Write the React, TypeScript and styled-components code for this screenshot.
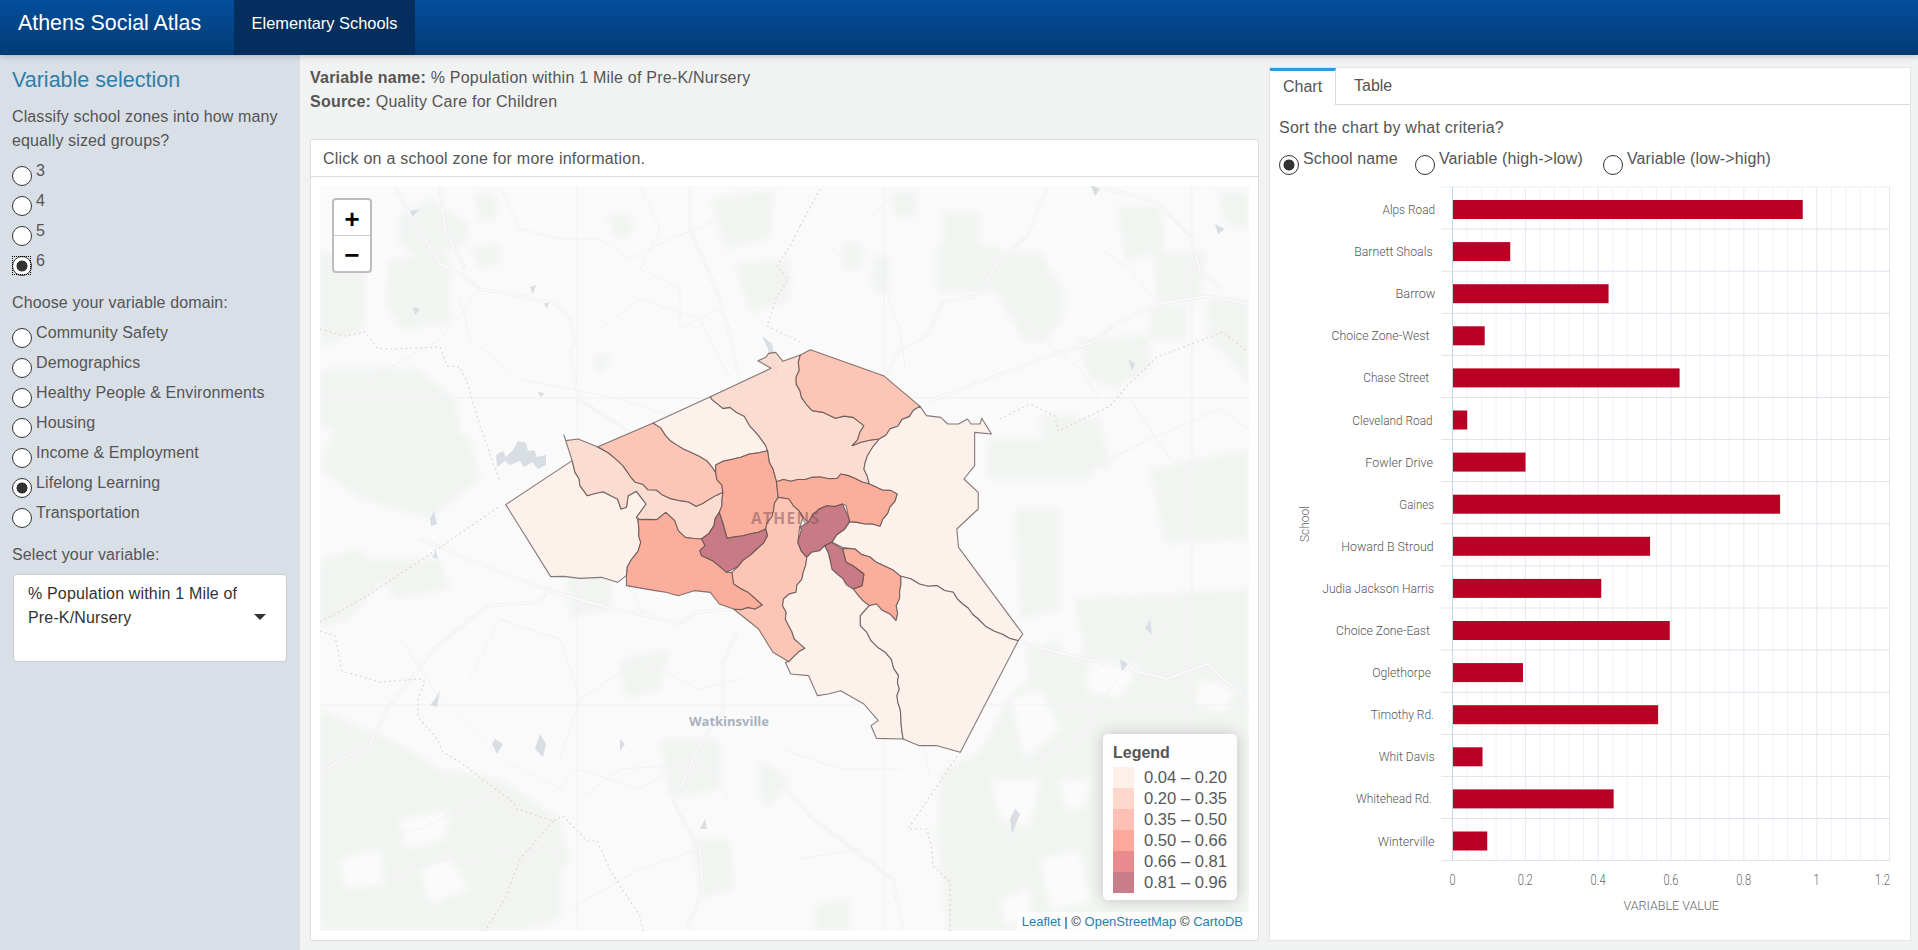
import React from "react";
import styled, { createGlobalStyle } from "styled-components";

const Global = createGlobalStyle`
  html, body { margin: 0; padding: 0; height: 100%; overflow: hidden; }
  body { font-family: "Liberation Sans", Arial, sans-serif; font-size: 16px; color: #555; background: #f1f2f2; }
  #root { height: 100%; }
`;

const Page = styled.div`
  display: flex;
  flex-direction: column;
  height: 950px;
`;
const Navbar = styled.header`
  height: 55px;
  flex: none;
  display: flex;
  align-items: stretch;
  position: relative;
  z-index: 2;
  background: linear-gradient(#024f9b, #033a74);
  box-shadow: 0 1px 6px rgba(0, 0, 0, 0.22);
`;
const Brand = styled.div`
  width: 216px;
  padding-left: 18px;
  line-height: 47px;
  font-size: 21.4px;
  color: #fff;
`;
const NavLink = styled.div`
  width: 181px;
  text-align: center;
  line-height: 47px;
  font-size: 16.4px;
  color: #fff;
  background: #032e5d;
`;
const Body = styled.div`
  flex: 1;
  display: grid;
  grid-template-columns: 300px 1fr;
  min-height: 0;
`;
const Sidebar = styled.aside`
  background: #d9dfe7;
  padding: 10px 13px 0 12px;
`;
const SideTitle = styled.h2`
  margin: 0 0 11px;
  font-weight: 400;
  font-size: 21.5px;
  line-height: 30px;
  height: 28px;
  color: #2f7ea8;
`;
const FieldLabel = styled.div`
  padding-top: 1px;
  line-height: 24px;
  font-size: 16px;
  letter-spacing: 0.12px;
  margin-bottom: 7px;
`;
const RadioGroup = styled.div`
  margin-bottom: 10px;
`;
const RadioRow = styled.label`
  position: relative;
  display: flex;
  align-items: flex-start;
  height: 30px;
  line-height: 22px;
  font-size: 16px;
  letter-spacing: 0.09px;
`;
const FocusMark = styled.span`
  position: absolute;
  left: 1px;
  top: 7px;
  width: 17px;
  height: 17px;
  outline: 1px dotted #000;
`;
const Radio = styled.input.attrs({ type: "radio", readOnly: true })`
  appearance: none;
  box-sizing: border-box;
  width: 20px;
  height: 20px;
  margin: 6px 4px 0 0;
  flex: none;
  border: 1px solid #333;
  border-radius: 50%;
  background: #fff;
  &:checked { background: radial-gradient(circle, #333 0 5.2px, #fff 5.8px); }
`;
const SelectBox = styled.div`
  box-sizing: border-box;
  width: 274px;
  height: 88px;
  margin-left: 1px;
  padding: 7px 36px 0 14px;
  position: relative;
  background: #fff;
  border: 1px solid #ccc;
  border-radius: 4px;
  font-size: 16px;
  letter-spacing: 0.16px;
  line-height: 24px;
  color: #333;
`;
const Caret = styled.span`
  position: absolute;
  right: 20px;
  top: 39px;
  border-style: solid;
  border-width: 6px 6px 0;
  border-color: #333 transparent transparent;
`;
const Main = styled.main`
  display: grid;
  grid-template-columns: 949px 642px;
  column-gap: 10px;
  padding: 0 7px 9px 10px;
  min-height: 0;
`;
const Center = styled.section`
  display: flex;
  flex-direction: column;
  padding-top: 11px;
  min-height: 0;
`;
const InfoLine = styled.div`
  line-height: 24px;
  font-size: 16px;
  letter-spacing: 0.22px;
  b { font-weight: 700; }
`;
const Panel = styled.div`
  flex: 1;
  margin-top: 25px;
  display: flex;
  flex-direction: column;
  background: #fff;
  border: 1px solid #ddd;
  border-radius: 2px;
  min-height: 0;
`;
const PanelHead = styled.div`
  height: 37px;
  flex: none;
  box-sizing: border-box;
  padding-left: 12px;
  line-height: 38px;
  font-size: 16px;
  letter-spacing: 0.23px;
  border-bottom: 1px solid #ddd;
`;
const PanelBody = styled.div`
  flex: 1;
  padding: 9px;
  min-height: 0;
`;
const MapBox = styled.div`
  position: relative;
  width: 929px;
  height: 745px;
  overflow: hidden;
  background: #fafafa;
`;
const MapSvg = styled.svg`
  display: block;
`;
const ZoomControl = styled.div`
  position: absolute;
  left: 12px;
  top: 12px;
  width: 36px;
  border: 2px solid #bdbdbd;
  border-radius: 4px;
  background: #fff;
`;
const ZoomButton = styled.div<{ $last?: boolean }>`
  height: 35px;
  overflow: hidden;
  line-height: 42px;
  text-align: center;
  font-family: "Liberation Mono", monospace;
  font-weight: 700;
  font-size: 26px;
  color: #000;
  ${(p) => (p.$last ? "" : "border-bottom: 1px solid #ccc;")}
`;
const Legend = styled.div`
  position: absolute;
  left: 783px;
  top: 548px;
  box-sizing: border-box;
  width: 134px;
  height: 166px;
  padding: 8px 8px 0 10px;
  background: rgba(255, 255, 255, 0.85);
  border-radius: 5px;
  box-shadow: 0 0 15px rgba(0, 0, 0, 0.2);
`;
const LegendTitle = styled.div`
  font-weight: 700;
  font-size: 16px;
  line-height: 22px;
  margin-bottom: 3px;
`;
const LegendRow = styled.div`
  display: flex;
  height: 21px;
  line-height: 22px;
  font-size: 16.6px;
  color: #595959;
`;
const Swatch = styled.i<{ $c: string }>`
  width: 21px;
  height: 21px;
  margin-right: 10px;
  background: ${(p) => p.$c};
`;
const Attribution = styled.div`
  position: absolute;
  right: 0;
  bottom: 0;
  height: 19px;
  padding: 0 6px 0 5px;
  line-height: 19px;
  font-size: 13px;
  color: #333;
  background: rgba(255, 255, 255, 0.75);
  a { color: #2a7ea6; text-decoration: none; }
`;
const RightPanel = styled.section`
  margin-top: 12px;
  display: flex;
  flex-direction: column;
  background: #fff;
  border: 1px solid #e3e3e3;
  min-height: 0;
`;
const Tabs = styled.div`
  flex: none;
  height: 37px;
  box-sizing: border-box;
  display: flex;
  border-bottom: 1px solid #d5dbe3;
`;
const Tab = styled.div<{ $active?: boolean }>`
  box-sizing: border-box;
  height: 37px;
  font-size: 16px;
  padding: 0 ${(p) => (p.$active ? "13px" : "18px")};
  ${(p) =>
    p.$active
      ? "width: 66px; line-height: 32px; border-top: 3px solid #2e9ad8; border-right: 1px solid #d5dbe3; background: #fff;"
      : "line-height: 36px;"}
`;
const SortBlock = styled.div`
  padding: 11px 0 0 9px;
`;
const SortLabel = styled.div`
  line-height: 24px;
  font-size: 16px;
  letter-spacing: 0.25px;
`;
const SortRow = styled.div`
  display: flex;
  margin-top: 9px;
  height: 26px;
`;
const SortOption = styled.label<{ $w: number }>`
  display: flex;
  align-items: flex-start;
  width: ${(p) => p.$w}px;
  line-height: 20px;
  font-size: 16px;
  letter-spacing: 0.12px;
`;
const ChartSvg = styled.svg`
  display: block;
  flex: none;
`;

const green: string[] = [
  "475,195 495,195 497,220 480,222", "400,215 430,200 470,225 465,245 420,260 400,245", "470,250 500,245 500,265 480,270",
  "390,260 450,255 450,325 400,330 385,300", "710,200 775,190 770,240 725,250", "735,265 790,260 790,300 750,315",
  "593,355 610,355 605,373 595,373", "607,215 630,215 633,235 615,240", "320,250 365,270 365,330 320,350",
  "320,370 420,370 455,400 460,430 320,430", "340,410 420,400 470,440 480,480 430,520 360,500 320,470",
  "370,560 440,560 450,590 395,600", "320,710 400,745 440,770 500,780 560,820 570,860 540,900 500,932 320,932",
  "320,560 360,550 385,580 350,620 320,630", "505,860 560,870 560,920 520,932 495,932", "893,193 917,193 917,217 893,217",
  "843,243 863,243 863,270 843,270", "873,257 890,257 890,293 873,293", "943,213 980,213 980,260 943,260",
  "937,247 1000,247 1000,293 937,293", "993,253 1040,253 1063,290 1063,320 1045,343 1025,343 1000,300",
  "1117,207 1160,207 1165,250 1125,263", "1077,340 1150,337 1150,370 1115,390 1090,380", "1150,307 1187,307 1187,340 1150,340",
  "1153,253 1207,253 1200,300 1157,305", "1207,300 1249,300 1249,370 1210,345", "987,440 1090,440 1095,480 987,480",
  "1217,193 1249,193 1249,230 1225,225", "1227,357 1249,357 1249,387", "1040,415 1100,420 1110,470 1045,465",
  "1150,470 1249,450 1249,540 1165,545", "1015,510 1060,510 1060,610 1020,620", "1075,600 1249,590 1249,690 1090,690",
  "1050,660 1249,640 1249,932 947,932 937,833 940,773 980,753 1007,700", "1025,650 1060,640 1070,670 1030,690",
  "565,560 615,560 610,610 570,620", "620,660 670,650 660,690 625,700", "660,740 720,740 720,790 670,800", "760,760 790,780 770,810 760,800",
  "815,905 850,900 850,932 815,932", "693,840 730,840 735,890 700,900",
];
const holes: string[] = [
  "1010,700 1040,690 1060,730 1025,760", "1090,660 1140,665 1120,700 1085,690", "1200,680 1235,690 1225,715 1195,705",
  "990,780 1040,780 1030,830 1000,820", "1040,860 1080,850 1090,905 1050,910", "1000,900 1030,890 1030,925 1005,925",
  "1060,780 1090,780 1085,810 1065,810", "400,820 450,810 445,840 405,850", "340,860 380,850 385,885 345,890",
  "420,870 450,860 470,890 430,905", "1100,500 1140,495 1150,530 1110,535",
];
const highways: string[] = [
  "M320 773 L370 745 L387 710 L437 647 L487 607 L540 603 L550 587",
  "M420 540 L493 570 L553 593 L613 610 L653 618 L680 625 L697 613 L733 610",
  "M630 587 L640 610 L653 618",
  "M737 633 L723 663 L723 713 L703 740 L673 803 L700 850 L703 890 L687 930",
  "M930 402 L1047 358 L1093 343 L1113 327 L1157 305 L1207 297 L1249 305",
  "M1047 190 L1027 237 L1000 260 L977 297 L943 303 L927 337 L897 353 L887 377",
  "M1097 187 L1157 203 L1190 237 L1200 270 L1220 290",
  "M1020 643 L1053 652 L1167 680 L1207 665 L1249 703",
  "M780 783 L813 820 L893 880 L903 930",
  "M395 187 L415 225 L440 265 L460 275 L480 290 L510 295 L555 305 L570 320 L575 340 L570 355 L577 390 L578 400 L640 440",
  "M440 187 L445 230 L465 270",
  "M690 187 L690 230 L720 300 L733 350 L745 410 L760 440",
];
const minor: string[] = [
  "M500 187 L520 230 L560 240 L600 240 L630 260 L670 240 L720 220", "M640 187 L660 230 L640 270 L680 290 L680 330 L720 310",
  "M460 300 L470 340 L520 380 L620 400 L680 420", "M320 420 L370 380 L440 340 L480 290", "M600 330 L640 300 L700 320 L730 380",
  "M400 640 L440 700 L500 760 L560 790 L577 770 L640 790 L690 760", "M470 680 L500 620 L560 640 L580 700 L560 760",
  "M580 700 L640 660 L700 690 L740 680", "M580 800 L620 770 L700 765 L730 800", "M570 910 L640 870 L700 850", "M830 250 L880 280 L900 330 L905 370",
  "M870 220 L900 190", "M1000 300 L1040 340 L1080 370 L1100 400", "M1100 250 L1130 270 L1155 300", "M1090 470 L1150 440 L1220 410 L1249 430",
  "M1130 400 L1170 460 L1249 480", "M900 650 L920 720 L930 780", "M780 750 L840 770 L900 770", "M800 860 L860 850 L900 890",
  "M320 850 L420 830 L500 790", "M360 932 L380 880 L450 860 L560 850", "M1010 770 L1080 740 L1110 690 L1170 620",
];
const counties: string[] = [
  "M320 330 L345 337 L365 333 L378 350 L395 350 L440 348 L447 367 L460 368 L467 383 L480 427 L500 483",
  "M320 623 L367 597 L433 553 L500 507",
  "M320 632 L335 637 L342 672 L380 683 L420 680 L425 683 L418 700 L418 718 L437 740 L443 753 L460 763 L513 803 L517 810 L553 822 L563 817 L587 842 L597 842 L610 870 L620 887 L640 917 L643 932",
  "M553 822 L520 860 L505 900 L485 932",
  "M1000 420 L1030 405 L1055 417 L1058 432 L1110 407 L1127 387 L1157 358 L1223 333 L1248 353",
  "M800 227 L790 247 L777 267 L788 280 L777 297 L767 327 L800 343",
  "M820 190 L800 227",
  "M960 753 L908 830 L927 830 L932 850 L933 867 L950 883 L950 932",
];
const spots: string[] = [
  "496,456 503,452 506,458 513,451 518,442 526,444 528,452 534,451 537,458 546,456 546,466 538,470 532,463 524,468 520,462 510,466 505,462 497,468",
  "762,337 772,345 780,380 774,380 768,350", "410,212 420,210 412,218", "530,288 536,286 533,295", "544,305 549,303 547,310",
  "413,308 420,310 415,316", "430,520 434,512 437,525 431,527", "538,392 545,395 540,398", "432,558 436,552 438,560",
  "435,700 440,692 437,708 430,706", "495,740 503,745 497,755 492,745", "540,735 546,745 543,758 535,750", "620,740 625,745 620,752",
  "1090,185 1100,190 1095,197", "1215,225 1225,230 1218,235", "1128,360 1135,365 1132,372", "1145,630 1150,620 1152,635",
  "1010,820 1015,810 1020,815 1012,835", "700,830 705,820 707,830", "1120,660 1128,665 1122,672",
];

type Zone = { c: string; p: string };
const Q = ["#fdefe9", "#fbd8cc", "#fcbfad", "#f9a590", "#e58b8c", "#c26c78"];
const rawZones: Zone[] = [
  { c: Q[0], p: "72,527 258,395 266,430 280,470 300,500 345,488 385,510 395,540 410,535 415,500 438,487 465,525 438,565 442,572 445,600 450,640 425,690 410,740 385,760 340,745 280,748 235,742 198,743" },
  { c: Q[1], p: "235,318 240,335 275,330 325,352 360,372 400,410 435,460 510,497 560,515 605,532 640,512 680,490 670,550 655,590 620,630 575,625 555,605 545,575 520,550 495,572 445,570 438,565 465,525 438,487 415,500 410,535 395,540 385,510 345,488 300,500 280,470 266,430 258,395" },
  { c: Q[2], p: "330,353 485,282 520,320 570,360 635,395 660,430 680,490 640,512 605,532 560,515 510,497 435,460 400,410 360,372" },
  { c: Q[0], p: "485,282 645,203 650,212 680,238 700,235 740,262 755,290 780,320 800,350 805,365 730,385 660,408 660,430 635,395 570,360 520,320" },
  { c: Q[1], p: "778,95 800,85 808,73 828,70 848,97 897,78 885,145 900,205 930,245 960,250 995,268 1045,265 1075,290 1042,350 1118,330 1085,380 1075,420 1090,465 1010,435 1000,448 930,445 830,458 820,420 810,400 805,365 800,350 780,320 755,290 740,262 700,235 680,238 650,212 645,203 815,118" },
  { c: Q[2], p: "897,78 925,62 1130,140 1232,232 1118,330 1042,350 1075,290 1045,265 995,268 960,250 930,245 900,205 885,145" },
  { c: Q[0], p: "1232,232 1250,260 1290,265 1310,285 1340,285 1365,270 1375,285 1400,285 1405,268 1432,315 1385,310 1385,410 1355,450 1395,490 1395,540 1335,600 1340,655 1520,915 1507,935 1440,907 1395,870 1325,790 1280,770 1230,765 1178,742 1110,700 1050,660 1015,655 985,640 1035,578 1120,592 1168,495 1090,465 1075,420 1085,380 1118,330" },
  { c: Q[3], p: "660,408 730,385 805,365 810,400 820,420 830,458 835,505 800,600 692,628 680,580 670,550 680,490 660,430" },
  { c: Q[3], p: "830,458 930,445 1000,448 1010,435 1090,465 1168,495 1120,592 1035,578 1025,530 1015,525 950,540 920,580 905,565 865,510 835,505" },
  { c: Q[2], p: "835,505 865,510 905,565 895,595 890,640 915,685 905,730 885,790 850,810 855,870 880,930 910,958 865,998 820,970 780,900 710,840 770,840 790,828 750,790 710,765 705,730 720,715 775,660 805,620 800,600" },
  { c: Q[5], p: "655,590 670,550 692,628 800,600 805,620 775,660 720,715 690,730 650,695 620,680 615,665 630,650 620,630" },
  { c: Q[3], p: "442,572 495,572 520,550 545,575 555,605 575,625 620,630 630,650 615,665 620,680 650,695 690,730 705,730 710,765 750,790 790,828 770,840 710,840 670,825 645,790 600,785 555,800 520,790 490,785 410,770 410,740 425,690 450,640 445,600" },
  { c: Q[3], p: "1015,658 1050,660 1110,700 1178,742 1165,875 1110,825 1090,830 1045,780 1070,770 1075,735 1025,700" },
  { c: Q[5], p: "895,595 920,580 950,540 1015,525 1030,560 1035,578 985,640 965,650 915,685 890,640 900,600" },
  { c: Q[5], p: "965,650 985,640 1015,660 1025,700 1075,735 1070,770 1045,780 985,720" },
  { c: Q[0], p: "915,685 965,650 985,720 1045,780 1090,830 1065,860 1065,890 1095,935 1135,970 1172,1040 1170,1120 1185,1230 1110,1228 1095,1190 1115,1175 1075,1125 1010,1085 975,1095 945,1100 920,1040 870,1035 855,1000 865,998 910,958 880,930 855,870 850,810 885,790 905,730" },
  { c: Q[0], p: "1090,830 1110,825 1165,875 1178,742 1230,765 1280,770 1325,790 1395,870 1440,907 1507,935 1345,1270 1280,1250 1230,1250 1185,1230 1170,1120 1172,1040 1135,970 1095,935 1065,890 1065,860" },
];

// Inner borders of the school zones are jagged: subdivide edges shared by two zones, identically for both.
type Pt = [number, number];
const parsePts = (s: string): Pt[] => s.split(" ").map((q) => q.split(",").map(Number) as Pt);
const edgeKey = (a: Pt, b: Pt) => (a[0] < b[0] || (a[0] === b[0] && a[1] < b[1]) ? `${a}|${b}` : `${b}|${a}`);
const rnd = (a: number, b: number) => {
  const s = Math.sin(a * 12.9898 + b * 78.233) * 43758.5453;
  return s - Math.floor(s);
};
const edgeUse = new Map<string, number>();
rawZones.forEach((z) => {
  const pts = parsePts(z.p);
  pts.forEach((p, i) => {
    const k = edgeKey(p, pts[(i + 1) % pts.length]);
    edgeUse.set(k, (edgeUse.get(k) || 0) + 1);
  });
});
const zones: Zone[] = rawZones.map((z) => {
  const pts = parsePts(z.p);
  const out: Pt[] = [];
  pts.forEach((p, i) => {
    const q = pts[(i + 1) % pts.length];
    out.push(p);
    const k = edgeKey(p, q);
    if ((edgeUse.get(k) || 0) < 2) return;
    const forward = k === `${p}|${q}`;
    const [a, b] = forward ? [p, q] : [q, p];
    const len = Math.hypot(b[0] - a[0], b[1] - a[1]);
    const n = Math.floor(len / 20);
    const mid: Pt[] = [];
    for (let j = 1; j < n; j++) {
      const t = j / n;
      const off = (rnd(a[0] + j * 3.1, b[1] + j * 7.7) - 0.5) * 11;
      mid.push([
        a[0] + (b[0] - a[0]) * t - ((b[1] - a[1]) / len) * off,
        a[1] + (b[1] - a[1]) * t + ((b[0] - a[0]) / len) * off,
      ]);
    }
    out.push(...(forward ? mid : mid.reverse()));
  });
  return { c: z.c, p: out.map((o) => `${o[0].toFixed(1)},${o[1].toFixed(1)}`).join(" ") };
});

const legend: [string, string][] = [
  ["#feefe9", "0.04 – 0.20"], ["#fdd7cb", "0.20 – 0.35"], ["#fdc0b4", "0.35 – 0.50"],
  ["#fca99b", "0.50 – 0.66"], ["#e88b8e", "0.66 – 0.81"], ["#c87d89", "0.81 – 0.96"],
];
const domains = ["Community Safety", "Demographics", "Healthy People & Environments", "Housing", "Income & Employment", "Lifelong Learning", "Transportation"];
const schools: [string, number, number, number][] = [
  ["Alps Road", 0.96, 1382.5, 52.6], ["Barnett Shoals", 0.157, 1354.3, 78.3], ["Barrow", 0.427, 1395.5, 40],
  ["Choice Zone-West", 0.087, 1331.5, 98], ["Chase Street", 0.622, 1363.3, 65.7], ["Cleveland Road", 0.039, 1352.3, 80.3],
  ["Fowler Drive", 0.199, 1365.3, 67.7], ["Gaines", 0.898, 1399.3, 34.7], ["Howard B Stroud", 0.541, 1341.3, 92.3],
  ["Judia Jackson Harris", 0.407, 1322.3, 111.7], ["Choice Zone-East", 0.595, 1336, 94], ["Oglethorpe", 0.192, 1372.3, 58.7],
  ["Timothy Rd.", 0.563, 1370.7, 63.3], ["Whit Davis", 0.081, 1378.7, 56], ["Whitehead Rd.", 0.441, 1356, 75.8], ["Winterville", 0.094, 1377.8, 56.8],
];
const X0 = 1452.5;
const PX = 364.3;
const ROW = 42.1;

function BaseMap() {
  return (
    <MapSvg width={929} height={745} viewBox="320 187 929 745">
      <defs>
        <filter id="soft"><feGaussianBlur stdDeviation="3" /></filter>
      </defs>
      <g filter="url(#soft)">
        {green.map((p, i) => <polygon key={i} points={p} fill="#f1f4f1" />)}
        {holes.map((p, i) => <polygon key={i} points={p} fill="#fafbfa" />)}
      </g>
      {[577, 884, 1192].map((x) => <line key={x} x1={x} x2={x} y1={187} y2={932} stroke="#f1f1f0" />)}
      {[399, 706].map((y) => <line key={y} x1={320} x2={1249} y1={y} y2={y} stroke="#f1f1f0" />)}
      <g fill="none" strokeLinejoin="round">
        {minor.map((d, i) => <path key={i} d={d} stroke="#f1f2f1" strokeWidth="1" />)}
        {highways.map((d, i) => <path key={i} d={d} stroke="#edeeee" strokeWidth="3" />)}
        {highways.map((d, i) => <path key={i} d={d} stroke="#fcfcfc" strokeWidth="1.4" />)}
        {counties.map((d, i) => <path key={i} d={d} stroke="#dfd6d6" strokeWidth="1.2" strokeDasharray="2 3" />)}
      </g>
      {spots.map((p, i) => <polygon key={i} points={p} fill="#d8dee3" />)}
      <text x={689} y={727} fontFamily="Open Sans, sans-serif" fontWeight={700} fontSize={13} fill="#a8b2be" textLength={80}>Watkinsville</text>
      <g transform="translate(480 330) scale(0.35714 0.33333)">
        {zones.map((z, i) => (
          <polygon key={i} points={z.p} fill={z.c} fillOpacity={0.9} stroke="#574a4b" strokeOpacity={0.72} strokeWidth={1.1} vectorEffect="non-scaling-stroke" strokeLinejoin="round" />
        ))}
      </g>
      <text x={751} y={525} fontFamily="Open Sans, sans-serif" fontWeight={700} fontSize={15.5} fill="#85565e" fillOpacity={0.55} textLength={68}>ATHENS</text>
    </MapSvg>
  );
}

function Chart() {
  const minorTicks = Array.from({ length: 31 }, (_, i) => i);
  const major = ["0", "0.2", "0.4", "0.6", "0.8", "1", "1.2"];
  return (
    <ChartSvg width={640} height={765} viewBox="1270 175 640 765">
      {minorTicks.map((i) => (
        <line key={i} x1={X0 + i * 14.57} x2={X0 + i * 14.57} y1={187} y2={860.5} stroke={i % 5 === 0 ? "#e5e8ef" : "#f0f2f6"} />
      ))}
      {schools.map((_, i) => (
        <line key={i} x1={1441} x2={1890} y1={187 + ROW * (i + 1)} y2={187 + ROW * (i + 1)} stroke="#dde3ec" />
      ))}
      <line x1={1441} x2={1890} y1={187} y2={187} stroke="#ebeef3" />
      <line x1={X0} x2={X0} y1={187} y2={860.5} stroke="#c4d4e4" />
      {schools.map(([name, v, x, w], i) => (
        <g key={name}>
          <rect x={X0 + 0.5} y={200 + ROW * i} width={v * PX} height={19} fill="#b90024" />
          <text x={x} y={214 + ROW * i} fontFamily="Roboto, sans-serif" fontWeight={300} fontSize={13.5} fill="#555" textLength={w} lengthAdjust="spacingAndGlyphs">{name}</text>
        </g>
      ))}
      {major.map((t, i) => (
        <text key={t} x={i === 6 ? 1890 : X0 + i * 72.8} y={884.5} textAnchor={i === 6 ? "end" : "middle"} fontFamily="Roboto, sans-serif" fontWeight={300} fontSize={14} fill="#666" textLength={t.length === 1 ? 6 : 15} lengthAdjust="spacingAndGlyphs">{t}</text>
      ))}
      <text x={1623.5} y={909.5} fontFamily="Roboto, sans-serif" fontWeight={300} fontSize={13.5} fill="#666" textLength={95.5} lengthAdjust="spacingAndGlyphs">VARIABLE VALUE</text>
      <text transform="translate(1309 542) rotate(-90)" fontFamily="Roboto, sans-serif" fontWeight={300} fontSize={13.5} fill="#666" textLength={36} lengthAdjust="spacingAndGlyphs">School</text>
    </ChartSvg>
  );
}

export default function App() {
  return (
    <Page>
      <Global />
      <Navbar>
        <Brand>Athens Social Atlas</Brand>
        <NavLink>Elementary Schools</NavLink>
      </Navbar>
      <Body>
        <Sidebar>
          <SideTitle>Variable selection</SideTitle>
          <FieldLabel>Classify school zones into how many<br />equally sized groups?</FieldLabel>
          <RadioGroup>
            {["3", "4", "5", "6"].map((n) => (
              <RadioRow key={n}>
                <Radio name="groups" defaultChecked={n === "6"} />
                {n}
                {n === "6" && <FocusMark />}
              </RadioRow>
            ))}
          </RadioGroup>
          <FieldLabel>Choose your variable domain:</FieldLabel>
          <RadioGroup>
            {domains.map((d) => (
              <RadioRow key={d}>
                <Radio name="domain" defaultChecked={d === "Lifelong Learning"} />
                {d}
              </RadioRow>
            ))}
          </RadioGroup>
          <FieldLabel>Select your variable:</FieldLabel>
          <SelectBox>
            % Population within 1 Mile of Pre-K/Nursery
            <Caret />
          </SelectBox>
        </Sidebar>
        <Main>
          <Center>
            <InfoLine><b>Variable name:</b> % Population within 1 Mile of Pre-K/Nursery</InfoLine>
            <InfoLine><b>Source:</b> Quality Care for Children</InfoLine>
            <Panel>
              <PanelHead>Click on a school zone for more information.</PanelHead>
              <PanelBody>
                <MapBox>
                  <BaseMap />
                  <ZoomControl>
                    <ZoomButton>+</ZoomButton>
                    <ZoomButton $last>−</ZoomButton>
                  </ZoomControl>
                  <Legend>
                    <LegendTitle>Legend</LegendTitle>
                    {legend.map(([c, t]) => (
                      <LegendRow key={t}><Swatch $c={c} />{t}</LegendRow>
                    ))}
                  </Legend>
                  <Attribution><a>Leaflet</a> | © <a>OpenStreetMap</a> © <a>CartoDB</a></Attribution>
                </MapBox>
              </PanelBody>
            </Panel>
          </Center>
          <RightPanel>
            <Tabs>
              <Tab $active>Chart</Tab>
              <Tab>Table</Tab>
            </Tabs>
            <SortBlock>
              <SortLabel>Sort the chart by what criteria?</SortLabel>
              <SortRow>
                <SortOption $w={136}><Radio name="sort" defaultChecked />School name</SortOption>
                <SortOption $w={188}><Radio name="sort" />Variable (high-&gt;low)</SortOption>
                <SortOption $w={180}><Radio name="sort" />Variable (low-&gt;high)</SortOption>
              </SortRow>
            </SortBlock>
            <Chart />
          </RightPanel>
        </Main>
      </Body>
    </Page>
  );
}
